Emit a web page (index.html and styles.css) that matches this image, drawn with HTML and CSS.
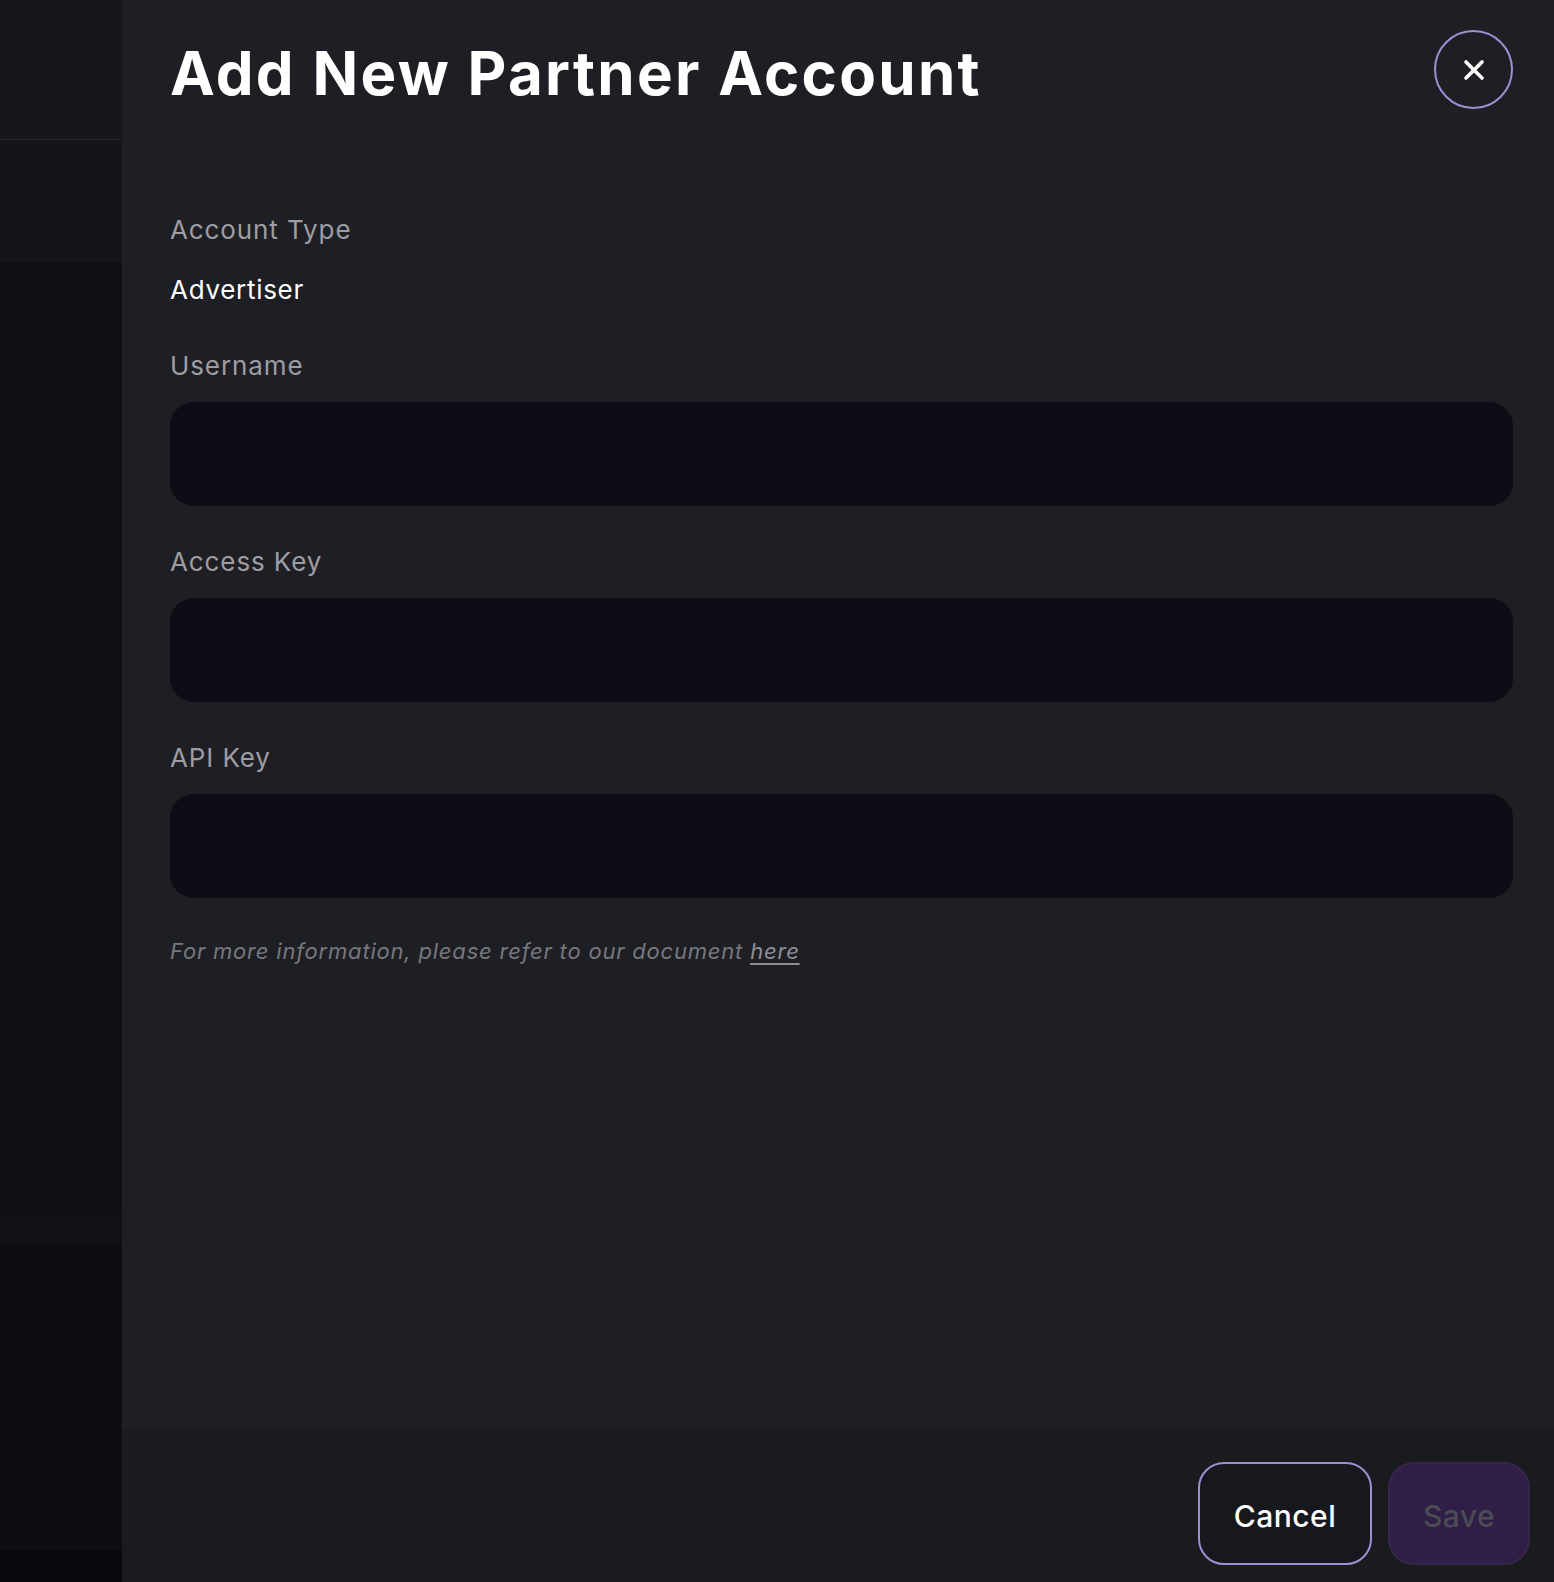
FILE: index.html
```html
<!DOCTYPE html>
<html lang="en">

<head>
    <meta charset="UTF-8">
    <meta name="viewport" content="width=device-width, initial-scale=1.0">
    <title>Add New Partner Account</title>
    <link rel="stylesheet" href="styles.css">
</head>

<body>
    <div class="page">
        <!-- dimmed app behind the drawer -->
        <div class="backdrop">
            <div class="bdTop"></div>
            <div class="bdNav"></div>
            <div class="bdMain"></div>
            <div class="bdBand"></div>
            <div class="bdRest"></div>
            <div class="bdBottom"></div>
        </div>

        <div class="drawer">
            <div class="drawerHead">
                <h1 class="title">Add New Partner Account</h1>
                <button class="closeBtn" type="button" aria-label="Close">
                    <svg width="22" height="22" viewBox="0 0 22 22">
                        <path d="M3 3 L19 19 M19 3 L3 19" stroke="#fff" stroke-width="3.6" stroke-linecap="round" fill="none"/>
                    </svg>
                </button>
            </div>

            <div class="form">
                <div class="field">
                    <div class="label">Account Type</div>
                    <div class="value">Advertiser</div>
                </div>
                <div class="field">
                    <label class="label">Username</label>
                    <input class="input" type="text">
                </div>
                <div class="field">
                    <label class="label">Access Key</label>
                    <input class="input" type="text">
                </div>
                <div class="field">
                    <label class="label">API Key</label>
                    <input class="input" type="text">
                </div>
                <p class="note">For more information, please refer to our document <a href="#">here</a></p>
            </div>

            <div class="drawerFoot">
                <button class="btn cancel" type="button">Cancel</button>
                <button class="btn save" type="button" disabled>Save</button>
            </div>
        </div>
    </div>
</body>

</html>
```

FILE: styles.css
```css
* {margin: 0; padding: 0; box-sizing: border-box;}
body {background: #0e0e13; font-family: Inter, "Liberation Sans", sans-serif; color: #fff;}

.page {display: flex; height: 1582px; overflow: hidden;}

.backdrop {width: 122px; flex-shrink: 0; display: flex; flex-direction: column;}
.bdTop {height: 140px; background: #16161d; border-bottom: 1px solid #26262b;}
.bdNav {height: 122px; background: #14141b;}
.bdMain {height: 948px; background: #0e0e13;}
.bdBand {height: 32px; background: #101116;}
.bdRest {height: 308px; background: #0d0d12;}
.bdBottom {flex: 1; background: #08080d;}

.drawer {flex: 1; display: flex; flex-direction: column; background: #1e1f24;}

.drawerHead {display: flex; justify-content: space-between; align-items: flex-start; padding: 30px 41px 0 48px;}
.title {margin-top: 7px; font-size: 60px; line-height: 72px; font-weight: 700; letter-spacing: 2.3px;}
.closeBtn {width: 79px; height: 79px; border-radius: 50%; border: 2px solid #9c90d4; background: transparent; display: flex; align-items: center; justify-content: center; cursor: pointer;}

.form {flex: 1; padding: 103px 41px 0 48px; display: flex; flex-direction: column; gap: 38px;}
.field {display: flex; flex-direction: column;}
.label {font-size: 26px; line-height: 36px; color: #9d9da3; letter-spacing: 0.9px;}
.value {margin-top: 24px; margin-bottom: 2px; font-size: 26px; line-height: 36px; color: #fff; letter-spacing: 0.7px;}
.input {margin-top: 18px; height: 104px; border: none; border-radius: 24px; background: #0e0d16; color: #fff; font-family: inherit; font-size: 26px; padding: 0 28px; outline: none;}
.note {margin-top: 0; font-size: 22px; line-height: 30px; font-style: italic; color: #77777d; letter-spacing: 0.8px;}
.note a {color: #8d8d93; text-decoration: underline; text-underline-offset: 4px;}

.drawerFoot {height: 152px; background: #1a1b1f; display: flex; justify-content: flex-end; align-items: flex-start; gap: 16px; padding: 32px 24px 0 0;}
.btn {height: 103px; border-radius: 26px; font-family: inherit; font-size: 30px; font-weight: 500; padding: 4px 30px 0; letter-spacing: 0.5px;}
.cancel {width: 174px; background: #17181d; color: #fff; border: 2px solid #9c90d4;}
.save {width: 142px; background: #2f1f47; color: #4b4b52; border: 2px solid #35284a;}
```
